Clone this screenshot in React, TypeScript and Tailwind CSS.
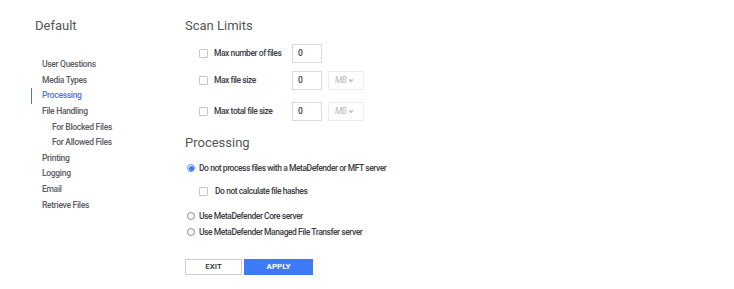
import { useState } from "react";

const navItems = [
  { label: "User Questions" },
  { label: "Media Types" },
  { label: "Processing", active: true },
  { label: "File Handling" },
  { label: "For Blocked Files", sub: true },
  { label: "For Allowed Files", sub: true },
  { label: "Printing" },
  { label: "Logging" },
  { label: "Email" },
  { label: "Retrieve Files" },
];

export default function App() {
  const [mode, setMode] = useState("none");

  return (
    <div className="flex w-[734px] h-[289px] bg-white font-['Roboto',sans-serif] text-[#3b3b45] overflow-hidden">
      {/* sidebar */}
      <div className="w-[185px] shrink-0 pl-[35px] pt-[17px]">
        <div className="text-[13px] leading-[18px] text-[#555]">Default</div>
        <ul className="mt-[22px] pl-[7px] font-medium tracking-[-0.3px]">
          {navItems.map((n) => (
            <li
              key={n.label}
              className={
                "h-[15.65px] leading-[15.65px] text-[8.5px] " +
                (n.sub ? "pl-[10px] " : "") +
                (n.active
                  ? "-ml-[11px] pl-[10px] border-l-[1.5px] border-[#4a73f0] text-[#4a73f0]"
                  : "text-[#5a5a62]")
              }
            >
              {n.label}
            </li>
          ))}
        </ul>
      </div>

      {/* main */}
      <div className="flex-1 pt-[17px] font-medium tracking-[-0.45px]">
        <h2 className="text-[13px] leading-[18px] font-normal tracking-normal text-[#555]">Scan Limits</h2>

        <div className="mt-[9px] pl-[14px]">
          <LimitRow label="Max number of files" />
          <LimitRow label="Max file size" unit className="mt-[8px]" />
          <LimitRow label="Max total file size" unit className="mt-[12px]" />
        </div>

        <h2 className="mt-[13px] text-[13px] leading-[18px] font-normal tracking-normal text-[#555]">Processing</h2>

        <div className="mt-[9px] pl-[2px]">
          <Radio checked={mode === "none"} onClick={() => setMode("none")}>
            Do not process files with a MetaDefender or MFT server
          </Radio>
          <div className="mt-[9px] pl-[12px] flex items-center h-[14px] text-[8.5px]">
            <Check />
            <span className="ml-[7px]">Do not calculate file hashes</span>
          </div>
          <div className="mt-[11px]">
            <Radio checked={mode === "core"} onClick={() => setMode("core")}>
              Use MetaDefender Core server
            </Radio>
          </div>
          <div className="mt-[2px]">
            <Radio checked={mode === "mft"} onClick={() => setMode("mft")}>
              Use MetaDefender Managed File Transfer server
            </Radio>
          </div>
        </div>

        <div className="mt-[20px] flex gap-[2px] tracking-normal">
          <button className="w-[57px] h-[16px] border border-[#cfcfcf] bg-white text-[8px] leading-none text-[#333]">
            EXIT
          </button>
          <button className="w-[69px] h-[16px] bg-[#3d7af5] text-[8px] leading-none font-bold text-white">
            APPLY
          </button>
        </div>
      </div>
    </div>
  );
}

function Check() {
  return <span className="block w-[9px] h-[9px] border border-[#c8c8c8] rounded-[1px] bg-white shrink-0" />;
}

function LimitRow({ label, unit, className = "" }: { label: string; unit?: boolean; className?: string }) {
  return (
    <div className={"flex items-center h-[19px] text-[8.5px] " + className}>
      <Check />
      <span className="ml-[6px] w-[78px]">{label}</span>
      <div className="w-[30px] h-[19px] border border-[#dcdcdc] pl-[5px] flex items-center text-[8.5px]">0</div>
      {unit && (
        <div className="ml-[6px] w-[36px] h-[19px] border border-[#ececec] pl-[6px] flex items-center text-[8.5px] font-normal italic text-[#b8b8b8]">
          MB
          <svg width="6" height="4" viewBox="0 0 6 4" className="ml-[2px]">
            <path d="M0 0.5h6L3 3.5z" fill="#c4c4c4" />
          </svg>
        </div>
      )}
    </div>
  );
}

function Radio({ checked, onClick, children }: { checked?: boolean; onClick?: () => void; children: React.ReactNode }) {
  return (
    <div className="flex items-center h-[14px] text-[8.5px] cursor-pointer" onClick={onClick}>
      <span
        className={
          "w-[8px] h-[8px] rounded-full border shrink-0 flex items-center justify-center " +
          (checked ? "border-[#5b8cf5]" : "border-[#8a8a8a]")
        }
      >
        {checked && <span className="w-[5px] h-[5px] rounded-full bg-[#3d7af5]" />}
      </span>
      <span className="ml-[4px]">{children}</span>
    </div>
  );
}
